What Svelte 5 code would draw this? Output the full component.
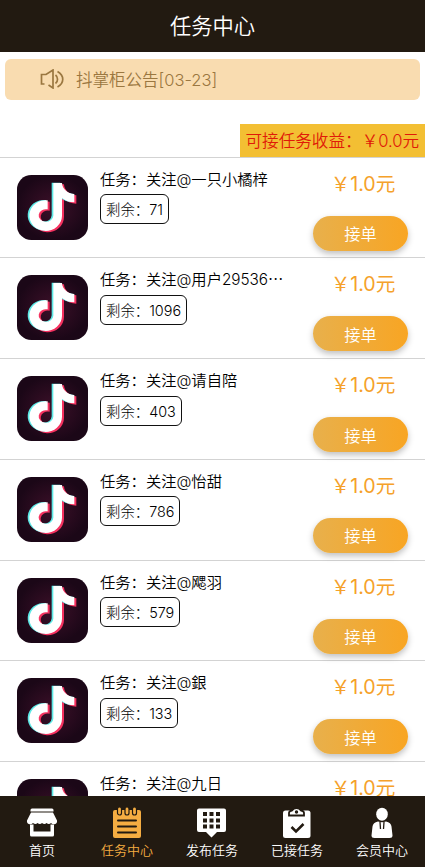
<!-- App.svelte: Task center page with notice, task list and bottom tab bar -->

<script>
  const tasks = [
    { name: "一只小橘梓", left: 71 },
    { name: "用户29536⋯", left: 1096 },
    { name: "请自陪", left: 403 },
    { name: "怡甜", left: 786 },
    { name: "飔羽", left: 579 },
    { name: "銀", left: 133 },
    { name: "九日", left: 265 },
  ];

  const tabs = [
    { icon: "shop", label: "首页" },
    { icon: "tasks", label: "任务中心" },
    { icon: "publish", label: "发布任务" },
    { icon: "accepted", label: "已接任务" },
    { icon: "member", label: "会员中心" },
  ];

  let activeTab = "tasks";
  const notePath =
    "M129 45h26c1 18 17 32 37 33v25c-14 0-27-5-37-13v53a49 46 0 1 1-43-46v27a22 19 0 1 0 17 19z";
</script>

<div class="page">
  <header>任务中心</header>

  <main>
    <!-- Notice bar -->
    <div class="notice">
      <svg width="25" height="20" viewBox="0 0 25 20" fill="none" stroke="currentColor" stroke-width="1.7">
        <path d="M4.5 15H1.5V5.5h4.5L13 1v18L8.5 16" />
        <path d="M15.5 6c2.7 2 2.7 6.500 0 8.500M17.5 2.500c7 4 7 11.500 0 15.500" />
      </svg>
      <span>抖掌柜公告[03-23]</span>
    </div>

    <div class="income">可接任务收益：￥0.0元</div>

    <!-- Task list -->
    <ul class="list">
      {#each tasks as task}
        <li class="task">
          <svg class="logo" viewBox="20 21 213 195" preserveAspectRatio="none">
            <defs>
              <radialGradient id="logo-bg">
                <stop offset="0" stop-color="#3d1029" />
                <stop offset="1" stop-color="#1b0717" />
              </radialGradient>
            </defs>
            <rect x="20" y="21" width="213" height="195" rx="43" fill="url(#logo-bg)" />
            <path d={notePath} fill="#f5315f" transform="translate(6 4)" />
            <path d={notePath} fill="#5ce9e6" transform="translate(-5 -1)" />
            <path d={notePath} fill="#fff" />
          </svg>
          <div class="info">
            <div class="name">任务：关注@{task.name}</div>
            <div class="left">剩余：{task.left}</div>
          </div>
          <div class="side">
            <div class="price">￥1.0元</div>
            <button type="button">接单</button>
          </div>
        </li>
      {/each}
    </ul>
  </main>

  <!-- Bottom tab bar -->
  <nav>
    {#each tabs as tab}
      <button
        type="button"
        class="tab"
        class:active={activeTab === tab.icon}
        on:click={() => (activeTab = tab.icon)}
      >
        <svg width="32" height="32" viewBox="0 0 32 32" fill="currentColor">
          {#if tab.icon === "shop"}
            <path d="M6 1.500h20q1.500 0 1.500 1.500v1.500h-23V3Q4.500 1.500 6 1.500z" />
            <path d="M5 5.500h22l4 8q.5 3-2.500 3.700-2 .3-3.500-1.200-2 2-4.500 0-2 2-4.500 0-2 2-4.500 0-2 2-4.500 0-1.500 1.500-3.500 1.200-3-.7-2.500-3.700z" />
            <path d="M4 17.500h3.500v7h17v-7H28V28q0 1.500-1.500 1.500h-21Q4 29.500 4 28z" />
          {:else if tab.icon === "tasks"}
            <rect x="2" y="3" width="28" height="28" rx="2" />
            <g fill="currentColor" stroke="#221a11" stroke-width="1.200">
              <rect x="6.500" y="0" width="4" height="8" rx="2" />
              <rect x="14" y="0" width="4" height="8" rx="2" />
              <rect x="21.500" y="0" width="4" height="8" rx="2" />
            </g>
            <path d="M7 13.500h18M7 19.500h18M7 25.500h18" stroke="#221a11" stroke-width="2" stroke-linecap="round" />
          {:else if tab.icon === "publish"}
            <path d="M3 1.500h25q2 0 2 2V23q0 2-2 2h-7l-5.500 5.500L10 25H3q-2 0-2-2V3.500q0-2 2-2z" />
            <path d="M7 5h4v4H7zM13.500 5h4v4h-4zM20 5h4v4h-4zM7 11.500h4v4H7zM13.500 11.500h4v4h-4zM20 11.500h4v4h-4zM7 17.500h4v4H7zM13.500 17.500h4v4h-4zM20 17.500h4v4h-4z" fill="#221a11" />
          {:else if tab.icon === "accepted"}
            <rect x="2" y="3.500" width="27.500" height="27.500" rx="2.500" />
            <path d="M8 8.500V6q0-2 3-2.500 1.500-2.500 4.500-2.500T20 3.500q3 .5 3 2.500v2.500z" stroke="#221a11" stroke-width="1.800" />
            <circle cx="15.500" cy="5" r="1.700" fill="#221a11" />
            <path d="M10.500 20l4.500 4.500 7.500-7.500" fill="none" stroke="#221a11" stroke-width="2.500" />
          {:else}
            <ellipse cx="16" cy="7.200" rx="5.800" ry="6.500" />
            <path d="M12 14.500q-5 1-5.500 5l-1 9q0 2.500 3 2.500h15q3 0 3-2.500l-1-9q-.5-4-5.500-5-4 1.500-8 0z" />
            <path d="M14 15l.5 7M18 15l-.5 7" stroke="#221a11" stroke-width="1.300" />
          {/if}
        </svg>
        <span>{tab.label}</span>
      </button>
    {/each}
  </nav>
</div>

<style>
  :global(body) {
    background: #fff;
  }

  .page {
    display: flex;
    flex-direction: column;
    height: 867px;
    overflow: hidden;
    font-family: Inter, "Noto Sans CJK SC", sans-serif;
    font-weight: 350;
    color: #000;
  }

  header {
    flex: none;
    height: 52px;
    line-height: 52px;
    background: #221a11;
    color: #fff;
    font-size: 21.3px;
    text-align: center;
  }

  main {
    flex: 1;
    min-height: 0;
    overflow: hidden;
    display: flex;
    flex-direction: column;
  }

  .notice {
    flex: none;
    display: flex;
    align-items: center;
    gap: 11px;
    height: 41.5px;
    margin: 6.5px 5px 0;
    padding-left: 35px;
    border-radius: 6px;
    background: #f9dcb0;
    color: #9b7740;
    font-size: 16.5px;
  }

  .income {
    flex: none;
    align-self: flex-end;
    box-sizing: border-box;
    width: 185.5px;
    height: 32.8px;
    margin-top: 24px;
    padding-left: 6px;
    line-height: 35px;
    background: #f3bf33;
    color: #e01a08;
    font-size: 16.6px;
    white-space: nowrap;
  }

  .list {
    margin: 0;
    padding: 0;
    list-style: none;
  }

  .task {
    display: flex;
    box-sizing: border-box;
    height: 100.7px;
    padding-left: 17px;
    border-top: 1px solid #d3d3d3;
  }

  .logo {
    flex: none;
    width: 71px;
    height: 65px;
    margin-top: 17px;
  }

  .info {
    width: 190px;
    margin: 10px 0 0 12px;
  }

  .name {
    height: 24px;
    line-height: 24px;
    font-size: 15.3px;
    white-space: nowrap;
  }

  .left {
    display: inline-block;
    box-sizing: border-box;
    height: 30px;
    margin-top: 2.5px;
    padding: 0 5px;
    border: 1px solid #111;
    border-radius: 6px;
    line-height: 30px;
    font-size: 14.4px;
    font-weight: 300;
  }

  .side {
    display: flex;
    flex-direction: column;
    align-items: center;
    width: 95px;
    margin: 10px 0 0 23px;
  }

  .price {
    height: 30px;
    padding-left: 5px;
    line-height: 32px;
    color: #f5a12a;
    font-size: 19.6px;
    font-weight: 400;
    white-space: nowrap;
  }

  .side button {
    width: 95px;
    height: 35px;
    margin-top: 18px;
    padding: 0;
    border: none;
    border-radius: 18px;
    background: linear-gradient(90deg, #e8b04c, #f8a523);
    box-shadow: 0 3px 6px rgba(0, 0, 0, 0.25);
    color: #fff;
    font: inherit;
    font-size: 16.3px;
  }

  nav {
    flex: none;
    display: flex;
    height: 71px;
    background: #221a11;
  }

  .tab {
    flex: 1;
    display: flex;
    flex-direction: column;
    align-items: center;
    padding: 11px 1px 0 0;
    border: none;
    background: none;
    color: #fff;
    font: inherit;
    font-size: 13px;
    line-height: 22px;
  }

  .tab.active {
    color: #f5ad42;
  }
</style>
